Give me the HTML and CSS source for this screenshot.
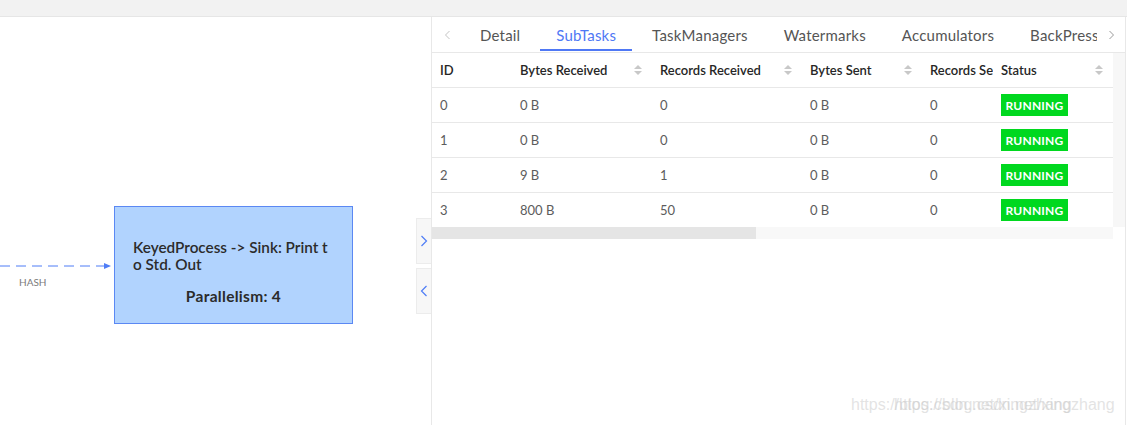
FILE: index.html
```html
<!DOCTYPE html>
<html>
<head>
<meta charset="utf-8">
<link rel="stylesheet" href="styles.css">
</head>
<body>
<div class="topbar"></div>
<div class="main">
  <div class="graph">
    <svg class="edge" width="120" height="30" viewBox="0 0 120 30">
      <line x1="0" y1="5" x2="104" y2="5" stroke="#4f7df6" stroke-width="1" stroke-dasharray="10,6"/>
      <path d="M104 2 L111 5 L104 8 Z" fill="#4f7df6"/>
      <text x="19" y="25" class="edge-label">HASH</text>
    </svg>
    <div class="node">
      <div class="node-title">KeyedProcess -&gt; Sink: Print to Std. Out</div>
      <div class="node-par">Parallelism: 4</div>
    </div>
    <div class="toggles">
      <div class="toggle"><svg width="8" height="12" viewBox="0 0 8 12"><path d="M1.5 1 L6.5 6 L1.5 11" fill="none" stroke="#4f7df6" stroke-width="1.2"/></svg></div>
      <div class="toggle"><svg width="8" height="12" viewBox="0 0 8 12"><path d="M6.5 1 L1.5 6 L6.5 11" fill="none" stroke="#4f7df6" stroke-width="1.2"/></svg></div>
    </div>
  </div>
  <div class="panel">
    <div class="tabs">
      <span class="tab-arrow left"><svg width="8" height="12" viewBox="0 0 8 12"><path d="M5.5 2 L1.5 6 L5.5 10" fill="none" stroke="#c4c4c4" stroke-width="1"/></svg></span>
      <div class="tab-list">
        <span class="tab">Detail</span>
        <span class="tab active">SubTasks</span>
        <span class="tab">TaskManagers</span>
        <span class="tab">Watermarks</span>
        <span class="tab">Accumulators</span>
        <span class="tab">BackPressure</span>
      </div>
      <span class="tab-arrow right"><svg width="8" height="12" viewBox="0 0 8 12"><path d="M2.5 2 L6.5 6 L2.5 10" fill="none" stroke="#9a9a9a" stroke-width="1"/></svg></span>
    </div>
    <div class="table-wrap">
      <div class="table">
        <div class="row head">
          <div class="cell c-id">ID</div>
          <div class="cell c-br">Bytes Received<span class="sorter"><i class="up"></i><i class="down"></i></span></div>
          <div class="cell c-rr">Records Received<span class="sorter"><i class="up"></i><i class="down"></i></span></div>
          <div class="cell c-bs">Bytes Sent<span class="sorter"><i class="up"></i><i class="down"></i></span></div>
          <div class="cell c-rs">Records Sent</div>
          <div class="cell c-st">Status<span class="sorter"><i class="up"></i><i class="down"></i></span></div>
        </div>
        <div class="row">
          <div class="cell c-id">0</div><div class="cell c-br">0 B</div><div class="cell c-rr">0</div><div class="cell c-bs">0 B</div><div class="cell c-rs">0</div>
          <div class="cell c-st"><span class="badge">RUNNING</span></div>
        </div>
        <div class="row">
          <div class="cell c-id">1</div><div class="cell c-br">0 B</div><div class="cell c-rr">0</div><div class="cell c-bs">0 B</div><div class="cell c-rs">0</div>
          <div class="cell c-st"><span class="badge">RUNNING</span></div>
        </div>
        <div class="row">
          <div class="cell c-id">2</div><div class="cell c-br">9 B</div><div class="cell c-rr">1</div><div class="cell c-bs">0 B</div><div class="cell c-rs">0</div>
          <div class="cell c-st"><span class="badge">RUNNING</span></div>
        </div>
        <div class="row last">
          <div class="cell c-id">3</div><div class="cell c-br">800 B</div><div class="cell c-rr">50</div><div class="cell c-bs">0 B</div><div class="cell c-rs">0</div>
          <div class="cell c-st"><span class="badge">RUNNING</span></div>
        </div>
        <div class="hscroll"><div class="thumb"></div></div>
      </div>
      <div class="vtrack"></div>
    </div>
  </div>
</div>
<div class="watermark"><span>https://blog.csdn.net/xingzhang</span><span class="wm2">https://blog.csdn.net/xingzhang</span></div>
</body>
</html>
```
FILE: styles.css
```css
* { box-sizing: border-box; }
html, body { margin: 0; padding: 0; }
body {
  width: 1127px;
  height: 425px;
  overflow: hidden;
  background: #fff;
  font-family: "Lato", "Noto Sans", sans-serif;
  position: relative;
}
.topbar {
  height: 17px;
  background: #f2f2f2;
  border-bottom: 1px solid #e6e6e6;
}
.main {
  display: flex;
  height: 408px;
}
.graph {
  position: relative;
  width: 431px;
  flex: none;
}
.edge {
  position: absolute;
  left: 0;
  top: 244px;
  overflow: visible;
}
.edge-label {
  font-family: "Lato", sans-serif;
  font-size: 10px;
  fill: #7a7a7a;
}
.node {
  position: absolute;
  left: 114px;
  top: 189px;
  width: 239px;
  height: 118px;
  background: #b1d3fe;
  border: 1px solid #5b88f3;
  padding: 32px 18px 0 18px;
  color: #2b2b2b;
}
.node-title {
  font-size: 15.3px;
  font-weight: 600;
  line-height: 17px;
  width: 198px;
  word-break: break-all;
}
.node-par {
  margin-top: 14px;
  font-size: 15.5px;
  font-weight: 700;
  text-align: center;
  letter-spacing: 0.3px;
}
.toggles {
  position: absolute;
  left: 416px;
  top: 201px;
  display: flex;
  flex-direction: column;
  gap: 4px;
}
.toggle {
  width: 15px;
  height: 46px;
  background: #f7f7f7;
  border: 1px solid #ececec;
  border-right: none;
  display: flex;
  align-items: center;
  justify-content: center;
}
.panel {
  width: 695px;
  flex: none;
  border-left: 1px solid #e8e8e8;
  border-right: 1px solid #e8e8e8;
  display: flex;
  flex-direction: column;
}
.tabs {
  height: 36px;
  border-bottom: 1px solid #e8e8e8;
  display: flex;
  align-items: stretch;
  position: relative;
}
.tab-arrow {
  width: 32px;
  flex: none;
  display: flex;
  align-items: center;
  justify-content: center;
}
.tab-arrow.right { width: 28px; margin-left: auto; }
.tab-list {
  display: flex;
  flex: 1;
  overflow: hidden;
  padding-left: 16px;
  white-space: nowrap;
}
.tab {
  padding: 0 16px;
  margin-right: 4px;
  display: flex;
  align-items: center;
  font-size: 15px;
  letter-spacing: 0.2px;
  color: #555;
  position: relative;
}
.tab:first-child { padding-left: 0; }
.tab.active { color: #4f78f5; }
.tab.active::after {
  content: "";
  position: absolute;
  left: 0;
  right: 0;
  bottom: 1px;
  height: 2px;
  background: #4f78f5;
}
.table-wrap {
  display: flex;
  align-items: flex-start;
}
.table {
  width: 681px;
  flex: none;
}
.vtrack {
  width: 12px;
  height: 174px;
  background: #f7f7f7;
}
.row {
  display: flex;
  height: 35px;
  border-bottom: 1px solid #e8e8e8;
  font-size: 13px;
  color: #5c5c5c;
}
.row.last { border-bottom: none; height: 34px; }
.row.head {
  color: #262626;
  font-weight: 600;
  font-size: 13px;
}
.cell {
  display: flex;
  align-items: center;
  padding-left: 8px;
  white-space: nowrap;
  overflow: hidden;
  position: relative;
  flex: none;
}
.c-id { width: 80px; }
.c-br { width: 140px; }
.c-rr { width: 150px; }
.c-bs { width: 120px; }
.c-rs { width: 71px; }
.c-st { width: 120px; }
.sorter {
  position: absolute;
  right: 10px;
  top: 12px;
  display: flex;
  flex-direction: column;
  gap: 2px;
}
.sorter i {
  display: block;
  width: 0;
  height: 0;
  border-left: 4px solid transparent;
  border-right: 4px solid transparent;
}
.sorter .up { border-bottom: 4px solid #c8c8c8; }
.sorter .down { border-top: 4px solid #c8c8c8; }
.badge {
  display: inline-flex;
  align-items: center;
  justify-content: center;
  width: 67px;
  height: 22px;
  background: #00d81f;
  color: #fff;
  font-weight: 700;
  font-size: 12px;
  letter-spacing: 0.2px;
}
.hscroll {
  height: 12px;
  background: #f8f8f8;
}
.thumb {
  width: 324px;
  height: 12px;
  background: #e5e5e5;
}
.watermark {
  position: absolute;
  left: 851px;
  top: 396px;
  font-family: "Liberation Sans", Arial, sans-serif;
  font-size: 16px;
  color: rgba(200, 200, 200, 0.5);
  white-space: nowrap;
}
.watermark .wm2 {
  position: absolute;
  left: 43px;
  top: 0;
}
```
